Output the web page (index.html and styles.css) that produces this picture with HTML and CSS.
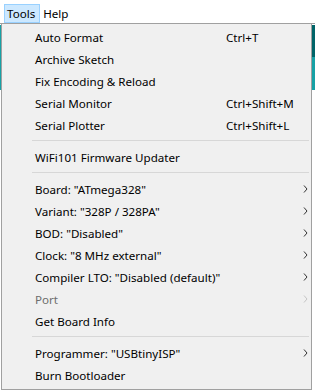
FILE: index.html
```html
<!DOCTYPE html>
<html lang="en">
  <head>
    <meta charset="UTF-8" />
    <meta name="viewport" content="width=device-width, initial-scale=1.0" />
    <title>Tools menu</title>
    <link rel="stylesheet" href="styles.css">
  </head>
  <body>
    <div class="ide">
      <div class="menubar">
        <span class="menu-title open">Tools</span>
        <span class="menu-title">Help</span>
      </div>
      <div class="workspace">
        <div class="toolbar">
          <div class="edge-left"></div>
          <div class="edge-right"></div>
        </div>
      </div>

      <!-- Tools dropdown -->
      <div class="menu">
        <div class="item"><span>Auto Format</span><span class="shortcut">Ctrl+T</span></div>
        <div class="item"><span>Archive Sketch</span></div>
        <div class="item"><span>Fix Encoding &amp; Reload</span></div>
        <div class="item"><span>Serial Monitor</span><span class="shortcut">Ctrl+Shift+M</span></div>
        <div class="item"><span>Serial Plotter</span><span class="shortcut">Ctrl+Shift+L</span></div>
        <div class="separator"></div>
        <div class="item"><span>WiFi101 Firmware Updater</span></div>
        <div class="separator"></div>
        <div class="item sub"><span>Board: "ATmega328"</span><span class="shortcut"></span><svg class="arrow" viewBox="0 0 5 8"><path d="M1 0.5 L4 4 L1 7.5" /></svg></div>
        <div class="item sub"><span>Variant: "328P / 328PA"</span><span class="shortcut"></span><svg class="arrow" viewBox="0 0 5 8"><path d="M1 0.5 L4 4 L1 7.5" /></svg></div>
        <div class="item sub"><span>BOD: "Disabled"</span><span class="shortcut"></span><svg class="arrow" viewBox="0 0 5 8"><path d="M1 0.5 L4 4 L1 7.5" /></svg></div>
        <div class="item sub"><span>Clock: "8 MHz external"</span><span class="shortcut"></span><svg class="arrow" viewBox="0 0 5 8"><path d="M1 0.5 L4 4 L1 7.5" /></svg></div>
        <div class="item sub"><span>Compiler LTO: "Disabled (default)"</span><span class="shortcut"></span><svg class="arrow" viewBox="0 0 5 8"><path d="M1 0.5 L4 4 L1 7.5" /></svg></div>
        <div class="item sub disabled"><span>Port</span><span class="shortcut"></span><svg class="arrow" viewBox="0 0 5 8"><path d="M1 0.5 L4 4 L1 7.5" /></svg></div>
        <div class="item"><span>Get Board Info</span></div>
        <div class="separator"></div>
        <div class="item sub"><span>Programmer: "USBtinyISP"</span><span class="shortcut"></span><svg class="arrow" viewBox="0 0 5 8"><path d="M1 0.5 L4 4 L1 7.5" /></svg></div>
        <div class="item"><span>Burn Bootloader</span></div>
      </div>
    </div>
  </body>
</html>
```

FILE: styles.css
```css
body {
  margin: 0;
  padding: 0;
  background-color: #ffffff;
  font-family: "Noto Sans", "Open Sans", sans-serif;
  font-size: 11.6px;
  color: #000000;
}

.ide {
  position: relative;
  width: 315px;
  height: 392px;
  overflow: hidden;
}

.menubar {
  display: flex;
  align-items: flex-end;
  height: 23px;
  padding-left: 4px;
  box-sizing: border-box;
}

.menu-title {
  display: flex;
  align-items: center;
  height: 19px;
  padding: 0 6px 0 2px;
  border: 1px solid transparent;
  box-sizing: border-box;
}

.menu-title.open {
  background-color: #cce8ff;
  border-color: #99d1ff;
  padding: 0 4px 0 2px;
}

.workspace {
  border-top: 1px solid #a0a0a0;
}

.toolbar {
  display: flex;
  justify-content: space-between;
  height: 66px;
}

.edge-left {
  width: 1px;
  margin-top: 1px;
  background-color: #17a1a5;
}

.edge-right {
  width: 3px;
  margin-top: 1px;
  background: linear-gradient(#006468 0, #006468 32px, #17a1a5 32px);
}

/* dropdown */
.menu {
  position: absolute;
  left: 1px;
  top: 23px;
  width: 311px;
  box-sizing: border-box;
  padding: 2px 0 3px;
  background-color: #f0f0f0;
  border: 1px solid #a0a0a0;
}

.item {
  display: grid;
  grid-template-columns: 191px 1fr 8px;
  align-items: center;
  height: 22px;
  padding: 0 2px 0 33px;
  white-space: nowrap;
}

.item .arrow {
  width: 5px;
  height: 8px;
  justify-self: end;
  margin-right: 1px;
  fill: none;
  stroke: #333333;
  stroke-width: 1;
}

.item.disabled {
  color: #6d6d6d;
}

.item.disabled .arrow {
  stroke: #c4c4c4;
}

.separator {
  height: 1px;
  margin: 4px 2px 5px 30px;
  background-color: #d7d7d7;
}
```
